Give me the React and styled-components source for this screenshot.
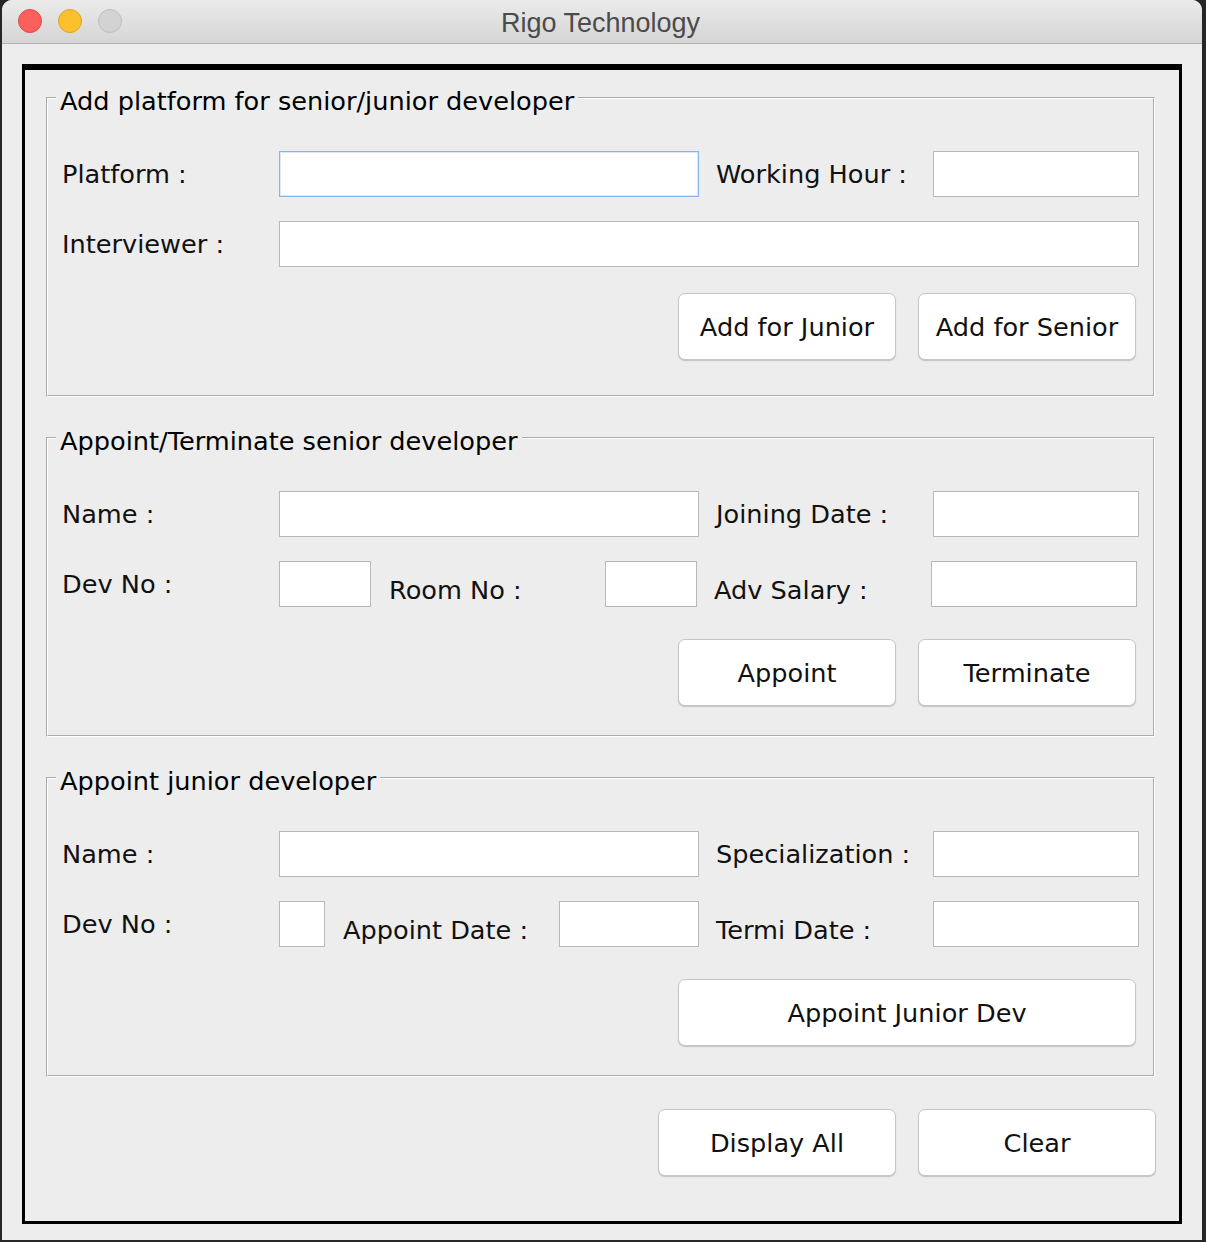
import React from 'react'
import styled, { createGlobalStyle } from 'styled-components'

const GlobalStyle = createGlobalStyle`
  html, body {
    margin: 0;
    padding: 0;
    background: #262626;
  }
  body {
    font-family: 'DejaVu Sans', 'Liberation Sans', sans-serif;
  }
`

const groups = [
  {
    title: 'Add platform for senior/junior developer',
    buttonsGap: 26,
    rows: [
      [
        { label: 'Platform :' },
        { field: 420, focused: true },
        { label: 'Working Hour :', pad: 17 },
        { field: 206 },
      ],
      [{ label: 'Interviewer :' }, { field: 860 }],
    ],
    buttons: [{ text: 'Add for Junior' }, { text: 'Add for Senior' }],
  },
  {
    title: 'Appoint/Terminate senior developer',
    buttonsGap: 32,
    rows: [
      [
        { label: 'Name :' },
        { field: 420 },
        { label: 'Joining Date :', pad: 17 },
        { field: 206 },
      ],
      [
        { label: 'Dev No :' },
        { field: 92 },
        { label: 'Room No :', pad: 18, low: true },
        { field: 92 },
        { label: 'Adv Salary :', pad: 17, low: true },
        { field: 206 },
      ],
    ],
    buttons: [{ text: 'Appoint' }, { text: 'Terminate' }],
  },
  {
    title: 'Appoint junior developer',
    buttonsGap: 32,
    rows: [
      [
        { label: 'Name :' },
        { field: 420 },
        { label: 'Specialization :', pad: 17 },
        { field: 206 },
      ],
      [
        { label: 'Dev No :' },
        { field: 46 },
        { label: 'Appoint Date :', pad: 18, low: true },
        { field: 140 },
        { label: 'Termi Date :', pad: 17, low: true },
        { field: 206 },
      ],
    ],
    buttons: [{ text: 'Appoint Junior Dev', wide: true }],
  },
]

export default function App() {
  return (
    <>
      <GlobalStyle />
      <Window>
        <TitleBar>
          <Lights>
            <Light color='#fc605c' edge='#de4943' />
            <Light color='#fcc02e' edge='#dca325' />
            <Light color='#d3d3d3' edge='#bdbdbd' />
          </Lights>
          <Title>Rigo Technology</Title>
        </TitleBar>
        <Body>
          <Frame>
            {groups.map((g) => (
              <Group key={g.title}>
                <Legend>{g.title}</Legend>
                <Rows>
                  {g.rows.map((row, i) => (
                    <Row key={i}>
                      {row.map((cell, j) =>
                        cell.label ? (
                          <Label key={j} pad={cell.pad} low={cell.low}>
                            {cell.label}
                          </Label>
                        ) : (
                          <Field key={j} w={cell.field} focused={cell.focused} />
                        )
                      )}
                    </Row>
                  ))}
                </Rows>
                <ButtonRow top={g.buttonsGap}>
                  {g.buttons.map((b) => (
                    <Button key={b.text} w={b.wide ? 458 : 218}>
                      {b.text}
                    </Button>
                  ))}
                </ButtonRow>
              </Group>
            ))}
            <FooterRow>
              <Button w={238}>Display All</Button>
              <Button w={238}>Clear</Button>
            </FooterRow>
          </Frame>
        </Body>
      </Window>
    </>
  )
}

const Window = styled.div`
  width: 1200px;
  height: 1240px;
  margin-left: 2px;
  background: #ededed;
  border-radius: 10px 10px 0 0;
  overflow: hidden;
  display: flex;
  flex-direction: column;
`

const TitleBar = styled.div`
  position: relative;
  height: 43px;
  flex: none;
  display: flex;
  align-items: center;
  justify-content: center;
  background: linear-gradient(#ebebeb, #d5d5d5);
  border-bottom: 1px solid #b1b1b1;
`

const Lights = styled.div`
  position: absolute;
  left: 16px;
  top: 9px;
  display: flex;
  gap: 16px;
`

const Light = styled.span`
  width: 24px;
  height: 24px;
  border-radius: 50%;
  box-sizing: border-box;
  background: ${({ color }) => color};
  border: 1px solid ${({ edge }) => edge};
`

const Title = styled.div`
  font-family: 'Liberation Sans', Arial, sans-serif;
  font-size: 27px;
  color: #4b4b4b;
  margin: 3px 0 0 -3px;
`

const Body = styled.div`
  flex: 1;
  padding: 20px 20px 16px;
  display: flex;
`

const Frame = styled.div`
  flex: 1;
  border: 3px solid #000;
  border-top-width: 6px;
  padding: 10px 24px 0 21px;
  display: flex;
  flex-direction: column;
  gap: 23px;
`

const Group = styled.fieldset`
  box-sizing: border-box;
  height: 317px;
  min-width: 0;
  margin: 0;
  padding: 35px 14px 0;
  border: 2px groove #ffffff;
  display: flex;
  flex-direction: column;
`

const Legend = styled.legend`
  margin-left: -6px;
  padding: 6px 4px 0;
  font-size: 25.6px;
  line-height: 30px;
  color: #000;
`

const Rows = styled.div`
  display: flex;
  flex-direction: column;
  gap: 24px;
`

const Row = styled.div`
  display: flex;
  align-items: center;
  height: 46px;
`

const Label = styled.div`
  box-sizing: border-box;
  flex: none;
  width: ${({ pad }) => (pad ? 234 : 217)}px;
  padding-left: ${({ pad }) => pad || 0}px;
  margin-top: ${({ low }) => (low ? 11 : 0)}px;
  font-size: 25.6px;
  line-height: 30px;
  color: #111;
  white-space: nowrap;
`

const Field = styled.div`
  box-sizing: border-box;
  flex: none;
  width: ${({ w }) => w}px;
  height: 46px;
  background: #fff;
  border: 1px solid ${({ focused }) => (focused ? '#86b4ec' : '#b8b8b8')};
  box-shadow: ${({ focused }) => (focused ? 'inset 0 0 0 1px rgba(150, 190, 240, 0.35)' : 'none')};
`

const ButtonRow = styled.div`
  display: flex;
  justify-content: flex-end;
  gap: 22px;
  margin-top: ${({ top }) => top}px;
  margin-right: 3px;
`

const Button = styled.button`
  box-sizing: border-box;
  width: ${({ w }) => w}px;
  height: 67px;
  padding: 0;
  background: #fff;
  border: 1px solid #c6c6c6;
  border-radius: 7px;
  box-shadow: 0 1px 1px rgba(0, 0, 0, 0.18);
  font-family: 'DejaVu Sans', sans-serif;
  font-size: 25.6px;
  color: #111;
`

const FooterRow = styled.div`
  display: flex;
  justify-content: flex-end;
  gap: 22px;
  margin-top: 9px;
  margin-right: -1px;
`
